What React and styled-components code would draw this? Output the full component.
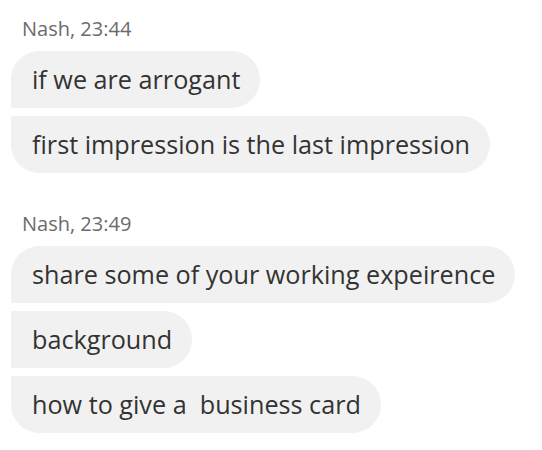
import React from "react";
import styled, { createGlobalStyle } from "styled-components";

const Global = createGlobalStyle`
body {
  margin: 0;
  background: #fff;
  font-family: 'Open Sans', 'Noto Sans', sans-serif;
}
`

const Thread = styled.div`
display: flex;
flex-direction: column;
gap: 38px;
padding: 16px 11px 0;
`

const Group = styled.div`
display: flex;
flex-direction: column;
align-items: flex-start;
gap: 8px;
`

const Meta = styled.div`
font-size: 20px;
line-height: 26px;
color: #6b6b6b;
margin: 0 0 1px 11px;
`

const Bubble = styled.div`
background: #f1f1f1;
color: #333;
font-size: 25.2px;
line-height: 33px;
padding: 12px 20px 12px 21px;
border-radius: ${p => p.$first ? "29px" : "0"} 29px 29px ${p => p.$last ? "29px" : "0"};
white-space: pre;
`

const groups = [
  {
    meta: "Nash, 23:44",
    lines: ["if we are arrogant", "first impression is the last impression"],
  },
  {
    meta: "Nash, 23:49",
    lines: ["share some of your working expeirence", "background", "how to give a  business card"],
  },
];

function App() {
  return (
    <>
      <Global />
      <Thread>
        {groups.map((g, i) => (
          <Group key={i}>
            <Meta>{g.meta}</Meta>
            {g.lines.map((t, j) => (
              <Bubble key={j} $first={j === 0} $last={j === g.lines.length - 1}>
                {t}
              </Bubble>
            ))}
          </Group>
        ))}
      </Thread>
    </>
  );
}

export default App;
